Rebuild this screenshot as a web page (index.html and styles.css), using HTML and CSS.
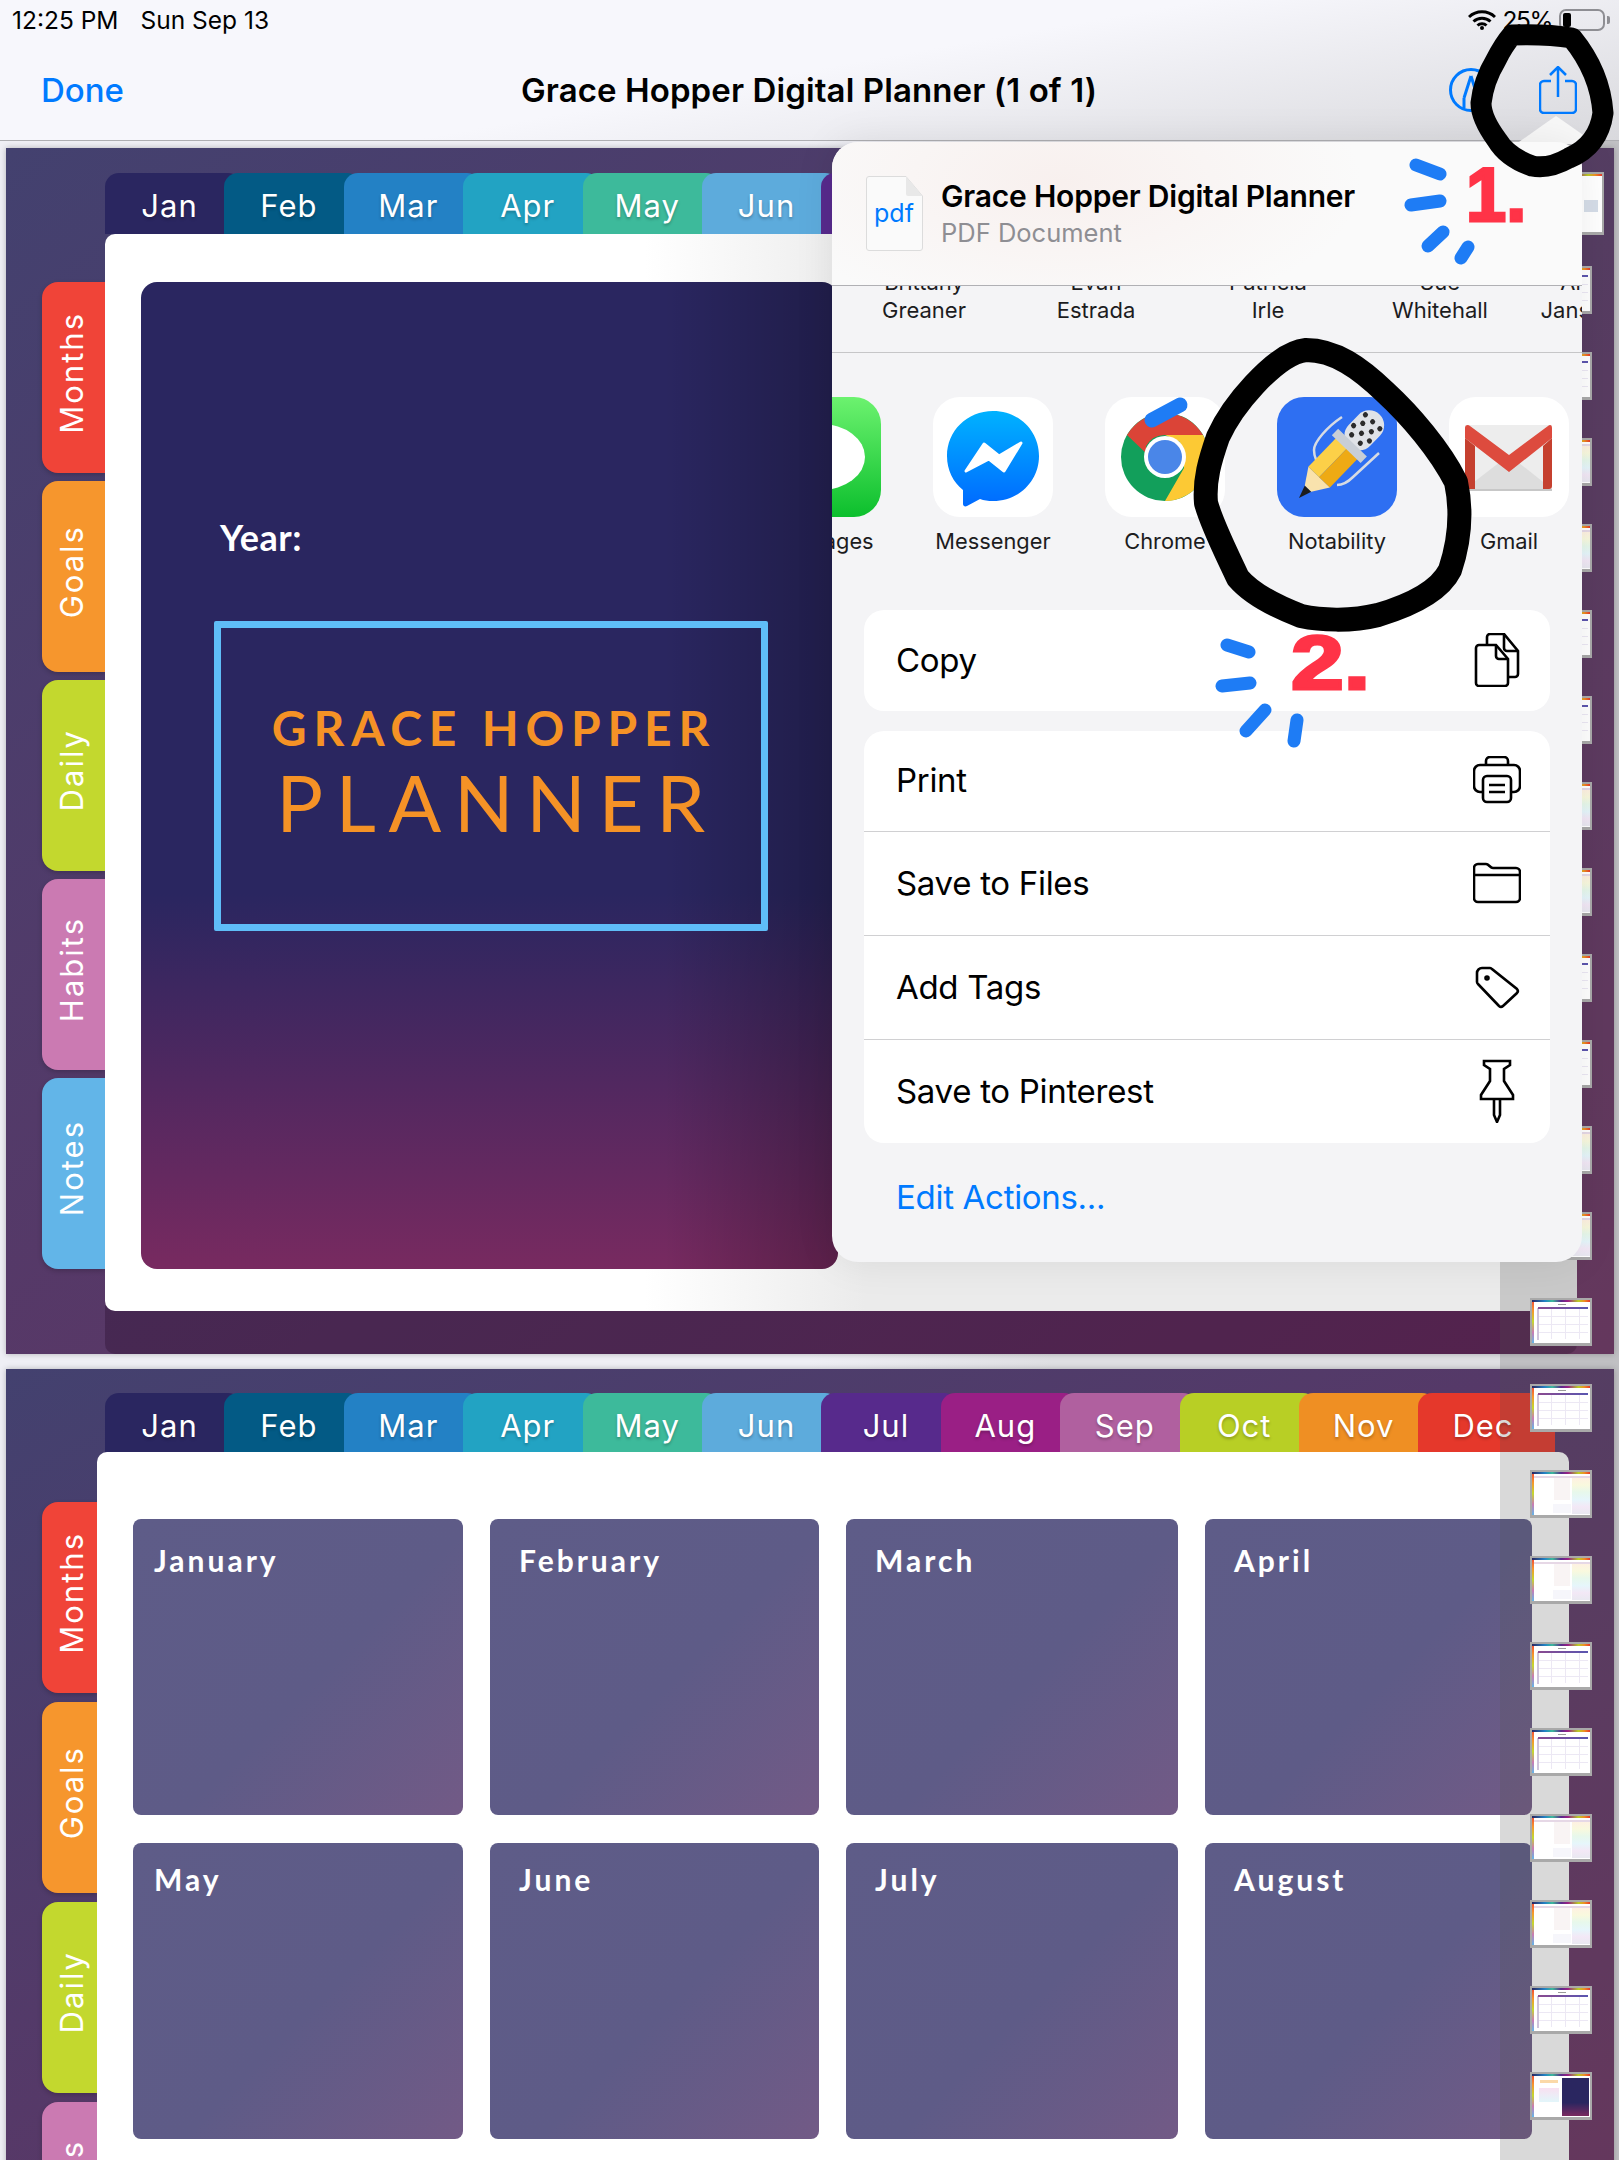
FILE: index.html
```html
<!DOCTYPE html>
<html>
	<head>
		<meta charset="utf-8">
		<title>Grace Hopper Digital Planner</title>
		<link rel="stylesheet" href="styles.css">
	</head>
	<body>
		<div class="screen">
			<!-- top bar -->
			<header class="navBar">
				<div class="statusRow">
					<div class="statusLeft"><span>12:25 PM</span><span>Sun Sep 13</span></div>
					<div class="statusRight">
						<svg class="wifi" viewBox="0 0 28 20"><path d="M1 7a19 19 0 0 1 26 0M5.500 11.500a12.500 12.500 0 0 1 17 0M9.500 15.500a6.500 6.500 0 0 1 9 0" /><circle cx="14" cy="18" r="2" /></svg>
						<span class="statusPct">25%</span>
						<div class="battery"><div class="batteryFill"></div></div>
						<div class="batteryNub"></div>
					</div>
				</div>
				<div class="titleRow">
					<a class="doneLink">Done</a>
					<div class="docTitle">Grace Hopper Digital Planner (1 of 1)</div>
					<div class="navIcons">
						<svg class="markupIcon" viewBox="0 0 44 44"><circle cx="22" cy="22" r="20.500" /><path d="M22 8l-7 22M22 8l7 22M15 30v10M29 30v10" /></svg>
						<svg class="shareIcon" viewBox="0 0 38 48"><path d="M12 15H5a4 4 0 0 0-4 4v24a4 4 0 0 0 4 4h28a4 4 0 0 0 4-4V19a4 4 0 0 0-4-4h-7" /><path d="M19 31V2M11 9l8-8 8 8" /></svg>
					</div>
				</div>
			</header>

			<!-- first pdf page: cover -->
			<section class="page pageCover">
				<div class="monthTabs">
					<div class="monthTab tabJan">Jan</div>
					<div class="monthTab tabFeb">Feb</div>
					<div class="monthTab tabMar">Mar</div>
					<div class="monthTab tabApr">Apr</div>
					<div class="monthTab tabMay">May</div>
					<div class="monthTab tabJun">Jun</div>
					<div class="monthTab tabJul"></div>
				</div>
				<div class="pageBody">
					<div class="sideTabs">
						<div class="sideTab sideMonths"><span>Months</span></div>
						<div class="sideTab sideGoals"><span>Goals</span></div>
						<div class="sideTab sideDaily"><span>Daily</span></div>
						<div class="sideTab sideHabits"><span>Habits</span></div>
						<div class="sideTab sideNotes"><span>Notes</span></div>
					</div>
					<div class="whiteCard">
						<div class="cover">
							<div class="coverYear">Year:</div>
							<div class="coverBox">
								<div class="coverName">GRACE HOPPER</div>
								<div class="coverWord">PLANNER</div>
							</div>
						</div>
					</div>
				</div>
			</section>

			<!-- second pdf page: month grid -->
			<section class="page pageMonths">
				<div class="monthTabs">
					<div class="monthTab tabJan">Jan</div>
					<div class="monthTab tabFeb">Feb</div>
					<div class="monthTab tabMar">Mar</div>
					<div class="monthTab tabApr">Apr</div>
					<div class="monthTab tabMay">May</div>
					<div class="monthTab tabJun">Jun</div>
					<div class="monthTab tabJul">Jul</div>
					<div class="monthTab tabAug">Aug</div>
					<div class="monthTab tabSep">Sep</div>
					<div class="monthTab tabOct">Oct</div>
					<div class="monthTab tabNov">Nov</div>
					<div class="monthTab tabDec">Dec</div>
				</div>
				<div class="pageBody">
					<div class="sideTabs">
						<div class="sideTab sideMonths"><span>Months</span></div>
						<div class="sideTab sideGoals"><span>Goals</span></div>
						<div class="sideTab sideDaily"><span>Daily</span></div>
						<div class="sideTab sideHabits"><span>Habits</span></div>
					</div>
					<div class="whiteCard">
						<div class="monthGrid">
							<div class="monthCard">January</div>
							<div class="monthCard">February</div>
							<div class="monthCard">March</div>
							<div class="monthCard">April</div>
							<div class="monthCard">May</div>
							<div class="monthCard">June</div>
							<div class="monthCard">July</div>
							<div class="monthCard">August</div>
						</div>
					</div>
				</div>
			</section>

			<!-- thumbnail rail on the right -->
			<aside class="thumbRail">
				<div class="thumb thumbFirst"></div>
				<div class="thumb thumbCal"></div>
				<div class="thumb thumbCal"></div>
				<div class="thumb thumbDay"></div>
				<div class="thumb thumbDay"></div>
				<div class="thumb thumbCal"></div>
				<div class="thumb thumbCal"></div>
				<div class="thumb thumbDay"></div>
				<div class="thumb thumbDay"></div>
				<div class="thumb thumbCal"></div>
				<div class="thumb thumbCal"></div>
				<div class="thumb thumbDay"></div>
				<div class="thumb thumbDay"></div>
				<div class="thumb thumbCal"></div>
				<div class="thumb thumbCal"></div>
				<div class="thumb thumbDay"></div>
				<div class="thumb thumbDay"></div>
				<div class="thumb thumbCal"></div>
				<div class="thumb thumbCal"></div>
				<div class="thumb thumbDay"></div>
				<div class="thumb thumbDay"></div>
				<div class="thumb thumbCal"></div>
				<div class="thumb thumbCover"></div>
			</aside>

			<!-- share sheet -->
			<div class="sheetArrow"></div>
			<div class="shareSheet">
				<div class="sheetHeader">
					<svg class="pdfIcon" viewBox="0 0 57 75">
						<path class="pdfPage" d="M3 .500H40L56.500 20V72a2.500 2.500 0 0 1-2.500 2.500H3A2.500 2.500 0 0 1 .500 72V3A2.500 2.500 0 0 1 3 .500z" />
						<path class="pdfFold" d="M40 .500V18a2 2 0 0 0 2 2H56.500z" />
						<text class="pdfText" x="28" y="46" text-anchor="middle">pdf</text>
					</svg>
					<div>
						<div class="sheetTitle">Grace Hopper Digital Planner</div>
						<div class="sheetSub">PDF Document</div>
					</div>
				</div>
				<div class="contactRow">
					<div class="contact">Brittany<br>Greaner</div>
					<div class="contact">Evan<br>Estrada</div>
					<div class="contact">Patricia<br>Irle</div>
					<div class="contact">Sue<br>Whitehall</div>
					<div class="contact">Annabelle<br>Jansen-Wilde</div>
				</div>
				<div class="appRow">
					<div class="app">
						<div class="appIcon">
							<svg viewBox="0 0 120 120">
								<defs><linearGradient id="msgGreen" x1="0" y1="0" x2="0" y2="1"><stop offset="0" stop-color="#6cf26f" /><stop offset="1" stop-color="#0cbf2d" /></linearGradient></defs>
								<rect width="120" height="120" fill="url(#msgGreen)" />
								<ellipse cx="60" cy="60" rx="44" ry="33" fill="#fff" />
							</svg>
						</div>
						<div class="appName">Messages</div>
					</div>
					<div class="app">
						<div class="appIcon">
							<svg viewBox="0 0 120 120">
								<defs><linearGradient id="msgBlue" x1="0" y1="0" x2="0" y2="1"><stop offset="0" stop-color="#00b2ff" /><stop offset="1" stop-color="#006aff" /></linearGradient></defs>
								<path fill="url(#msgBlue)" d="M60 14c26 0 46 20 46 45s-20 45-46 45c-5 0-9-.600-13-2l-13 7c-2 1-4 0-4-2V93C20 85 14 73 14 59c0-25 20-45 46-45z" />
								<path fill="#fff" stroke="#fff" stroke-width="3" stroke-linejoin="round" d="M33 74l18-27 15 12 22-13-17 28-15-12z" />
							</svg>
						</div>
						<div class="appName">Messenger</div>
					</div>
					<div class="app">
						<div class="appIcon">
							<svg viewBox="0 0 120 120">
								<circle cx="60" cy="60" r="44" fill="#129f5b" />
								<path fill="#db4437" d="M22 38A44 44 0 0 1 98 38H60A22 22 0 0 0 41 49L45 60z" />
								<path fill="#fcc934" d="M98 38A44 44 0 0 1 60 104L79 71 75 45 60 38z" />
								<circle cx="60" cy="60" r="21" fill="#fff" />
								<circle cx="60" cy="60" r="17" fill="#4a86e8" />
							</svg>
						</div>
						<div class="appName">Chrome</div>
					</div>
					<div class="app">
						<div class="appIcon iconNotability">
							<svg viewBox="0 0 120 120">
								<path class="nbWire" d="M65 20C50 30 37 45 37 53C37 60 40 66 45 71M102 56L76 80C70 86 65 88 60 88" />
								<g transform="translate(22 101) rotate(-46)">
									<path fill="#1c1c1c" d="M0 0l13-4.500v9z" />
									<path fill="#f9e2ad" d="M13-4.500L29-15V15L13 4.500z" />
									<rect x="29" y="-15" width="42" height="15" fill="#fcd048" />
									<rect x="29" y="0" width="42" height="15" fill="#eeaa14" />
									<rect x="72" y="-15" width="44" height="30" rx="15" fill="#dfe2e7" />
									<rect x="68" y="-20" width="9" height="40" fill="#c8ced6" />
									<g fill="#2b2b2b">
										<circle cx="82" cy="-6" r="2.600" /><circle cx="82" cy="6" r="2.600" />
										<circle cx="90" cy="0" r="2.600" /><circle cx="90" cy="-11" r="2.600" /><circle cx="90" cy="11" r="2.600" />
										<circle cx="98" cy="-6" r="2.600" /><circle cx="98" cy="6" r="2.600" />
										<circle cx="106" cy="0" r="2.600" /><circle cx="106" cy="-10" r="2.600" /><circle cx="106" cy="10" r="2.600" />
									</g>
								</g>
							</svg>
						</div>
						<div class="appName">Notability</div>
					</div>
					<div class="app">
						<div class="appIcon">
							<svg viewBox="0 0 120 120">
								<rect x="16" y="28" width="87" height="64" fill="#ededed" />
								<path fill="#dddddd" d="M16 92L60 58l43 34z" />
								<path fill="#c7c7c7" d="M16 92h87v2H16z" />
								<path fill="#dd4b3e" d="M16 31c0-3 3-4 5-2l39 29 39-29c2-2 4-1 4 2v10L60 75 16 41z" />
								<path fill="#c5402f" d="M16 41l10 8v43H19c-2 0-3-1-3-3zM103 41l-9 8v43h6c2 0 3-1 3-3z" />
							</svg>
						</div>
						<div class="appName">Gmail</div>
					</div>
				</div>
				<div class="actionGroup groupCopy">
					<div class="actionRow">
						<span>Copy</span>
						<svg class="actionIcon copyIcon" viewBox="0 0 44 54">
							<path d="M4 12H21L33 26V50a3 3 0 0 1-3 3H4a3 3 0 0 1-3-3V15a3 3 0 0 1 3-3z" />
							<path d="M21 12V23a3 3 0 0 0 3 3H33" />
							<path d="M12 12V4a3 3 0 0 1 3-3H29L43 18V41a3 3 0 0 1-3 3H33" />
							<path d="M29 1V15a3 3 0 0 0 3 3H43" />
						</svg>
					</div>
				</div>
				<div class="actionGroup">
					<div class="actionRow rowFirst">
						<span>Print</span>
						<svg class="actionIcon" viewBox="0 0 48 48">
							<path d="M13 9V5a4 4 0 0 1 4-4H31a4 4 0 0 1 4 4V9" />
							<path d="M10 36H7a6 6 0 0 1-6-6V15a6 6 0 0 1 6-6H41a6 6 0 0 1 6 6V30a6 6 0 0 1-6 6H38" />
							<rect x="10" y="20" width="28" height="26" rx="4" />
							<path d="M16 29H32M16 36H32" />
						</svg>
					</div>
					<div class="actionRow">
						<span>Save to Files</span>
						<svg class="actionIcon" viewBox="0 0 48 40">
							<path d="M1 8V5a4 4 0 0 1 4-4H13c3 0 4 4 7 4H43a4 4 0 0 1 4 4V35a4 4 0 0 1-4 4H5a4 4 0 0 1-4-4z" />
							<path d="M1 12H47" />
						</svg>
					</div>
					<div class="actionRow">
						<span>Add Tags</span>
						<svg class="actionIcon" viewBox="0 0 48 42">
							<path d="M9 2H17a3 3 0 0 1 2 1L44 23a3 3 0 0 1 0 4L30 40a3 3 0 0 1-4 0L5 18a3 3 0 0 1-1-2V7a5 5 0 0 1 5-5z" />
							<circle cx="14" cy="12" r="1.500" />
						</svg>
					</div>
					<div class="actionRow">
						<span>Save to Pinterest</span>
						<svg class="actionIcon pinIcon" viewBox="0 0 48 64">
							<path d="M11 2H37V6L31 10V22L40 36V40H8V36L17 22V10L11 6z" />
							<path d="M21 40V56L24 63 27 56V40" />
						</svg>
					</div>
				</div>
				<a class="editLink">Edit Actions...</a>
			</div>

			<!-- marker scribbles drawn on the screenshot -->
			<svg class="scribbles" viewBox="0 0 1619 2160">
				<g class="inkBlack">
					<path class="ringSmall" d="M1512 35C1540 34 1560 36 1572 38C1590 60 1601 85 1603 113C1600 135 1588 150 1569 158C1555 166 1542 168 1532 166C1515 160 1503 150 1497 140C1486 125 1481 112 1481 103C1483 85 1490 70 1496 60C1501 50 1506 42 1512 35z" />
					<path class="ringLarge" d="M1306 350C1335 350 1360 368 1385 392C1410 415 1440 450 1456 482C1462 510 1460 540 1450 570C1440 590 1415 604 1378 615C1350 622 1320 620 1301 616C1272 605 1250 592 1238 578C1225 550 1212 525 1206 503C1204 480 1210 460 1218 437C1228 415 1240 400 1254 385C1270 368 1288 352 1306 350z" />
				</g>
				<g class="inkBlue">
					<path d="M1416 165L1440 174M1411 205L1440 201M1428 246L1443 232M1461 258L1468 247" />
					<path d="M1227 645L1249 652M1222 686L1250 683M1246 731L1265 710M1294 741L1297 720" />
					<path class="inkBlueWide" d="M1152 420L1180 405" />
				</g>
				<text class="inkRed" transform="translate(1466 221) scale(0.95 1)">1.</text>
				<text class="inkRed" transform="translate(1291 689) scale(1.25 1)">2.</text>
			</svg>
		</div>
	</body>
</html>
```

FILE: styles.css
```css
* {
	padding: 0;
	margin: 0;
	box-sizing: border-box;
}
body {
	background-color: #efeff5;
	font-family: "Inter", "Liberation Sans", sans-serif;
}
.screen {
	position: relative;
	width: 1619px;
	height: 2160px;
	overflow: hidden;
	/* the strip between the two pages gets grey under the sheet */
	background-image: linear-gradient(to right, #efeff5 50%, #dfdfe3 65%);
}

/* top bar */
.navBar {
	height: 141px;
	background-image: linear-gradient(170deg, #f7f7fc 50%, #d9d9dd 100%);
	border-bottom: 1px solid #aeaeb2;
}
.statusRow {
	display: flex;
	justify-content: space-between;
	align-items: center;
	height: 40px;
	padding: 0 9px 0 12px;
	font-size: 24.500px;
	color: #000;
}
.statusLeft {
	display: flex;
	gap: 22px;
}
.statusRight {
	display: flex;
	align-items: center;
	gap: 7px;
}
.statusPct {
	letter-spacing: -1.500px;
}
.wifi {
	width: 28px;
	height: 20px;
	fill: #000;
}
.wifi path {
	fill: none;
	stroke: #000;
	stroke-width: 3;
}
.battery {
	width: 46px;
	height: 22px;
	border: 2px solid #8e8e93;
	border-radius: 7px;
	padding: 2px;
}
.batteryFill {
	width: 8px;
	height: 100%;
	background-color: #000;
	border-radius: 2px;
}
.batteryNub {
	width: 3px;
	height: 8px;
	margin-left: -5px;
	background-color: #8e8e93;
	border-radius: 0 2px 2px 0;
}
.titleRow {
	display: grid;
	grid-template-columns: 1fr auto 1fr;
	align-items: center;
	height: 100px;
	padding: 0 42px 0 41px;
}
.doneLink {
	font-size: 33px;
	font-weight: 500;
	color: #007aff;
}
.docTitle {
	font-size: 33px;
	font-weight: 600;
	letter-spacing: 0.100px;
	color: #000;
}
.navIcons {
	display: flex;
	justify-content: flex-end;
	align-items: center;
	gap: 46px;
}
.markupIcon {
	width: 44px;
	height: 44px;
	fill: none;
	stroke: #007aff;
	stroke-width: 3;
}
.shareIcon {
	width: 38px;
	height: 48px;
	fill: none;
	stroke: #007aff;
	stroke-width: 2.500;
}

/* pdf pages */
.page {
	width: 1608px;
	margin-left: 6px;
	overflow: hidden;
	background-image: linear-gradient(to bottom right, #43416f, #6a3060);
	box-shadow: 0 0 6px rgba(0, 0, 0, 0.25);
}
.pageCover {
	height: 1206px;
	margin-top: 7px;
	padding-top: 25px;
}
.pageMonths {
	height: 800px;
	margin-top: 15px;
	padding-top: 24px;
}
.monthTabs {
	display: flex;
	margin-left: 99px;
	height: 61px;
}
.pageMonths .monthTabs {
	height: 59px;
}
.monthTab {
	flex: none;
	width: 137px;
	margin-right: -17.600px;
	padding: 15px 8px 0 0;
	border-radius: 14px 14px 0 0;
	text-align: center;
	font-size: 31px;
	line-height: 36px;
	letter-spacing: 1px;
	color: #fff;
	text-shadow: 0 2px 3px rgba(0, 0, 0, 0.25);
}
.tabJan { background-color: #2a2660; }
.tabFeb { background-color: #035a85; }
.tabMar { background-color: #2381c5; }
.tabApr { background-color: #22a3c3; }
.tabMay { background-color: #3dba9b; }
.tabJun { background-color: #5dabdc; }
.tabJul { background-color: #572a8c; }
.tabAug { background-color: #9a1f85; }
.tabSep { background-color: #b0609f; }
.tabOct { background-color: #b8cf25; }
.tabNov { background-color: #ef8f23; }
.tabDec { background-color: #e5382b; }

.pageBody {
	display: flex;
	margin-left: 36px;
}
.sideTabs {
	flex: none;
	display: flex;
	flex-direction: column;
	gap: 8px;
	width: 63px;
	padding-top: 48px;
}
.pageMonths .sideTabs {
	width: 55px;
	gap: 9px;
	padding-top: 50px;
}
.sideTab {
	flex: none;
	display: flex;
	justify-content: flex-start;
	align-items: center;
	height: 191px;
	padding: 0 0 10px 15px;
	border-radius: 16px 0 0 16px;
	box-shadow: 0 2px 5px rgba(0, 0, 0, 0.2);
}
.sideTab span {
	writing-mode: vertical-rl;
	transform: rotate(180deg);
	font-size: 31px;
	line-height: 30px;
	letter-spacing: 2px;
	color: #fff;
}
.sideMonths { background-color: #f04438; }
.sideGoals { background-color: #f6962d; }
.sideDaily { background-color: #c3d82e; }
.sideHabits { background-color: #cb7ab2; }
.sideNotes { background-color: #62b5e8; }

.whiteCard {
	flex: none;
	width: 1472px;
	height: 1077px;
	padding: 48px 0 0 36px;
	background-image: linear-gradient(to right, #fff 540px, #ebebeb 760px);
	border-radius: 10px;
	box-shadow: 0 43px 0 rgba(30, 0, 30, 0.28);
}
.pageMonths .whiteCard {
	height: 760px;
	padding-top: 67px;
	background-image: none;
	background-color: #fff;
}

/* cover */
.cover {
	width: 697px;
	height: 987px;
	padding: 235px 0 0 73px;
	border-radius: 16px;
	background-image:
		linear-gradient(to right, rgba(0, 0, 0, 0) 75%, rgba(0, 0, 0, 0.25) 100%),
		linear-gradient(#2a2660 0, #2a2660 62%, #782a60 100%);
}
.coverYear {
	margin-left: 6px;
	font-family: "Lato", sans-serif;
	font-size: 36px;
	font-weight: 700;
	line-height: 40px;
	letter-spacing: 0.500px;
	color: #fff;
}
.coverBox {
	display: flex;
	flex-direction: column;
	align-items: center;
	justify-content: center;
	width: 554px;
	height: 310px;
	margin-top: 64px;
	padding-bottom: 6px;
	border: 7px solid #5fbdf8;
	border-radius: 2px;
	font-family: "Lato", sans-serif;
	color: #f59226;
}
.coverName {
	padding-left: 6px;
	font-size: 48px;
	font-weight: 700;
	line-height: 48px;
	letter-spacing: 6.800px;
}
.coverWord {
	margin-top: 10px;
	padding-left: 12px;
	font-size: 78px;
	font-weight: 400;
	line-height: 80px;
	letter-spacing: 12.700px;
}

/* month grid */
.monthGrid {
	display: grid;
	grid-template-columns: 330px 329px 332px 327px;
	grid-template-rows: 296px 296px;
	gap: 28px 27px;
}
.monthCard {
	padding: 24px 0 0 29px;
	border-radius: 8px;
	background-image: linear-gradient(135deg, #5e5c88 0, #5e5b87 55%, #725a86 100%);
	font-family: "Lato", sans-serif;
	font-size: 30px;
	font-weight: 700;
	line-height: 34px;
	letter-spacing: 3px;
	color: #fff;
}
.monthCard:nth-child(4n+1) {
	padding-left: 21px;
}
.monthCard:nth-child(n+5) {
	padding-top: 19px;
}

/* thumbnail rail */
.thumbRail {
	position: absolute;
	top: 141px;
	right: 0;
	bottom: 0;
	width: 119px;
	padding: 31px 0 0 30px;
	display: flex;
	flex-direction: column;
	gap: 38px;
	background-color: rgba(80, 80, 80, 0.22);
}
.thumb {
	flex: none;
	width: 62px;
	height: 48px;
	border: 2px solid #a9a9a9;
	border-bottom-width: 3px;
	background-color: #fff;
}
.thumbFirst {
	width: 74px;
	height: 63px;
	margin-bottom: -7px;
	background-image:
		linear-gradient(90deg, #2a2660, #2381c5 22%, #3dba9b 35%, #572a8c 50%, #9a1f85 62%, #b8cf25 80%, #ef8f23 90%, #e5382b),
		linear-gradient(#d5dde8, #d5dde8);
	background-size: 100% 2px, 14px 12px;
	background-position: 0 0, 52px 26px;
	background-repeat: no-repeat;
}
.thumbCal {
	background-image:
		linear-gradient(90deg, #2a2660, #2381c5 22%, #3dba9b 35%, #572a8c 50%, #9a1f85 62%, #b8cf25 80%, #ef8f23 90%, #e5382b),
		linear-gradient(#f04438, #f6962d, #c3d82e, #cb7ab2, #62b5e8),
		linear-gradient(90deg, #8a4a90, #5a56b0),
		linear-gradient(#cfc4dc, #cfc4dc),
		linear-gradient(#9a9a9a, #9a9a9a),
		repeating-linear-gradient(90deg, transparent 0, transparent 13px, #ece8f4 13px, #ece8f4 14px),
		repeating-linear-gradient(transparent 0, transparent 7px, #ece8f4 7px, #ece8f4 8px);
	background-size: 100% 2px, 2px 100%, 50px 2px, 2px 32px, 8px 1px, 50px 30px, 50px 30px;
	background-position: 0 0, 0 0, 6px 7px, 5px 8px, 26px 4px, 6px 9px, 6px 9px;
	background-repeat: no-repeat;
}
.thumbDay {
	background-image:
		linear-gradient(90deg, #2a2660, #2381c5 22%, #3dba9b 35%, #572a8c 50%, #9a1f85 62%, #b8cf25 80%, #ef8f23 90%, #e5382b),
		linear-gradient(#f04438, #f6962d, #c3d82e, #cb7ab2, #62b5e8),
		linear-gradient(#e6d8e6, #e6d8e6),
		linear-gradient(#f9f4f4, #f9f4f4),
		linear-gradient(#f6f6fb, #f6f6fb),
		linear-gradient(#fef1e2, #f9f9de, #e7f8ec, #e6f6fb, #f3e8f6, #e9e9f1);
	background-size: 100% 2px, 2px 100%, 100% 2px, 16px 22px, 18px 9px, 18px 36px;
	background-position: 0 0, 0 0, 0 4px, 22px 6px, 21px 32px, 100% 6px;
	background-repeat: no-repeat;
}
.thumbCover {
	background-image:
		linear-gradient(90deg, #2a2660, #2381c5 22%, #3dba9b 35%, #572a8c 50%, #9a1f85 62%, #b8cf25 80%, #ef8f23 90%, #e5382b),
		linear-gradient(#f04438, #f6962d, #c3d82e, #cb7ab2, #62b5e8),
		linear-gradient(#2a2660 65%, #7a2a60),
		linear-gradient(#fbd9a8, #fbd9a8),
		linear-gradient(#f9e0f1, #e2f6fa);
	background-size: 100% 2px, 2px 100%, 27px 38px, 18px 3px, 20px 14px;
	background-position: 0 0, 0 0, 30px 4px, 8px 6px, 7px 14px;
	background-repeat: no-repeat;
}

/* share sheet */
.sheetArrow {
	position: absolute;
	top: 116px;
	left: 1516px;
	width: 80px;
	height: 28px;
	background-color: #f8f8f8;
	clip-path: polygon(50% 0, 60% 20%, 100% 100%, 0 100%, 40% 20%);
}
.shareSheet {
	position: absolute;
	top: 142px;
	left: 832px;
	width: 750px;
	height: 1120px;
	overflow: hidden;
	background-color: #f4f4f6;
	border-radius: 26px;
	box-shadow: 0 0 40px rgba(0, 0, 0, 0.08);
}
.sheetHeader {
	display: flex;
	align-items: center;
	gap: 18px;
	height: 144px;
	padding-left: 34px;
	background-image: radial-gradient(ellipse 300px 140px at 230px 40px, #f8f0ee, #fafafa);
	border-bottom: 1px solid #b0b0b4;
}
.pdfIcon {
	flex: none;
	width: 57px;
	height: 75px;
}
.pdfPage {
	fill: #fafafa;
	stroke: #dcdcdc;
}
.pdfFold {
	fill: #e8e8e8;
}
.pdfText {
	font-size: 25px;
	fill: #007aff;
}
.sheetTitle {
	font-size: 30px;
	font-weight: 600;
	line-height: 38px;
	letter-spacing: -0.200px;
	color: #000;
}
.sheetSub {
	font-size: 25.500px;
	line-height: 36px;
	color: #8e8e93;
}
.contactRow {
	display: flex;
	align-items: flex-end;
	overflow: hidden;
	height: 66px;
	margin-left: 6px;
	padding-bottom: 28px;
	font-size: 22px;
	line-height: 28px;
	color: #1c1c1e;
}
.contact {
	flex: none;
	width: 172px;
	text-align: center;
	white-space: nowrap;
}
.appRow {
	display: flex;
	gap: 52px;
	height: 258px;
	margin-left: -71px;
	padding-top: 44px;
	border-top: 1px solid #c6c6c8;
}
.contactRow,
.appRow {
	width: 900px;
}
.app {
	flex: none;
	width: 120px;
}
.appIcon {
	width: 120px;
	height: 120px;
	overflow: hidden;
	background-color: #fff;
	border-radius: 27px;
}
.appIcon svg {
	display: block;
	width: 120px;
	height: 120px;
}
.iconNotability {
	background-color: #2e6ff2;
}
.nbWire {
	fill: none;
	stroke: #d7dbe2;
	stroke-width: 2.500;
}
.appName {
	margin-top: 10px;
	text-align: center;
	white-space: nowrap;
	font-size: 21.800px;
	line-height: 28px;
	color: #1c1c1e;
}
.actionGroup {
	margin: 20px 32px 0;
	background-color: #fff;
	border-radius: 20px;
}
.groupCopy {
	margin-top: 0;
}
.actionRow {
	display: flex;
	justify-content: space-between;
	align-items: center;
	height: 104px;
	padding: 0 29px 2px 32px;
	border-top: 1px solid #d0d0d2;
	font-size: 33px;
	letter-spacing: -0.300px;
	color: #000;
}
.groupCopy .actionRow {
	height: 101px;
	border-top: 0;
}
.rowFirst {
	height: 100px;
	border-top: 0;
}
.actionIcon {
	flex: none;
	width: 48px;
	height: 48px;
	fill: none;
	stroke: #000;
	stroke-width: 2.600;
}
.copyIcon {
	height: 54px;
}
.pinIcon {
	height: 64px;
}
.editLink {
	display: block;
	margin: 34px 0 0 64px;
	font-size: 33px;
	line-height: 40px;
	letter-spacing: -0.300px;
	color: #007aff;
}

/* scribbles */
.scribbles {
	position: absolute;
	top: 0;
	left: 0;
	width: 1619px;
	height: 2160px;
}
.inkBlack path {
	fill: none;
	stroke: #000;
	stroke-linejoin: round;
}
.ringSmall {
	stroke-width: 21;
}
.ringLarge {
	stroke-width: 24;
}
.inkBlue path {
	fill: none;
	stroke: #1e7cf5;
	stroke-width: 13;
	stroke-linecap: round;
}
.inkBlue .inkBlueWide {
	stroke-width: 15;
}
.inkRed {
	font-family: "Liberation Sans", sans-serif;
	font-size: 76px;
	font-weight: 700;
	fill: #ff3347;
	stroke: #ff3347;
	stroke-width: 3;
}
```
